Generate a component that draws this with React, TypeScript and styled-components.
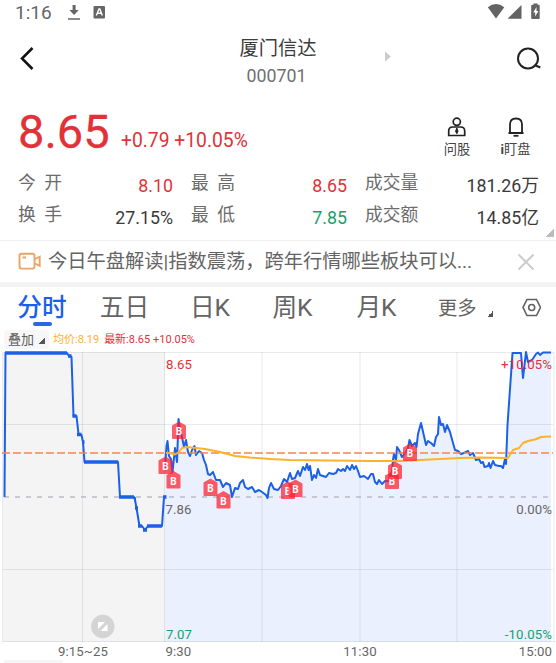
import React from 'react';
import styled, { createGlobalStyle } from 'styled-components';

const RED = '#e03238';
const GREEN = '#18a06a';
const BLUE = '#1b60e6';

const GlobalStyle = createGlobalStyle`
  * { box-sizing: border-box; }
  body {
    margin: 0;
    background: #fff;
    overflow: hidden;
    font-family: Roboto, "Noto Sans CJK SC", sans-serif;
    color: #3c3c3c;
  }
  svg { display: block; flex: none; }
`;

const Page = styled.main`
  width: 556px;
  height: 663px;
  overflow: hidden;
  display: flex;
  flex-direction: column;
`;

const StatusBar = styled.div`
  height: 26px;
  display: flex;
  justify-content: space-between;
  padding: 0 14px 0 15px;
  color: #666;
`;

const StatusGroup = styled.div`
  display: flex;
  align-items: flex-start;
`;

const Clock = styled.span`
  width: 50px;
  font-size: 19px;
  line-height: 26px;
`;

const Header = styled.header`
  height: 70px;
  display: grid;
  grid-template-columns: 178px 200px 178px;
`;

const HeaderSide = styled.div<{ $end?: boolean }>`
  display: flex;
  justify-content: ${p => (p.$end ? 'space-between' : 'flex-start')};
  padding: ${p => (p.$end ? '20px 14px 0 6px' : '20px 0 0 19px')};
`;

const Title = styled.div`
  text-align: center;
  padding-top: 10px;
`;

const StockName = styled.div`
  font-size: 19.3px;
  line-height: 26px;
`;

const StockCode = styled.div`
  font-size: 17.8px;
  line-height: 28px;
  padding-right: 3px;
  color: #707070;
`;

const Quote = styled.section`
  height: 69px;
  display: flex;
  padding: 0 12px 0 18px;
`;

const Price = styled.div`
  width: 103px;
  font-size: 47px;
  line-height: 72px;
  color: ${RED};
  -webkit-text-stroke: 0.3px ${RED};
`;

const Change = styled.div`
  flex: 1;
  font-size: 19.3px;
  line-height: 90px;
  white-space: nowrap;
  color: ${RED};
`;

const Action = styled.div<{ $w: number }>`
  width: ${p => p.$w}px;
  padding-top: 20px;
  display: flex;
  flex-direction: column;
  align-items: center;
  font-size: 13.3px;
  line-height: 20px;
  white-space: nowrap;
  color: #444;
`;

const ActionLabel = styled.span`
  margin-top: 2px;
`;

const Stats = styled.section`
  height: 76px;
  display: grid;
  grid-template-columns: 60px 95px 64px 110px 72px 120px;
  grid-template-rows: 32px 32px;
  padding: 1px 17px 0 18px;
  border-bottom: 1px solid #f0f0f0;
  position: relative;
`;

const StatLabel = styled.div<{ $spaced?: boolean; $indent?: number }>`
  font-size: 17.8px;
  line-height: 34px;
  padding-left: ${p => p.$indent || 0}px;
  letter-spacing: ${p => (p.$spaced ? '8.5px' : '0')};
  white-space: nowrap;
  color: #6c6c6c;
`;

const StatValue = styled.div<{ $color?: string }>`
  font-size: 17.8px;
  line-height: 32px;
  padding-top: 4px;
  text-align: right;
  white-space: nowrap;
  color: ${p => p.$color || '#3a3a3a'};
`;

const Corner = styled.i<{ $size: number; $color: string }>`
  width: ${p => p.$size}px;
  height: ${p => p.$size}px;
  background: linear-gradient(135deg, transparent 50%, ${p => p.$color} 50%);
`;

const ExpandCorner = styled(Corner)`
  position: absolute;
  right: 2px;
  bottom: 3px;
`;

const News = styled.section`
  height: 46px;
  display: flex;
  padding: 0 21px 0 18px;
  border-bottom: 5px solid #f4f4f4;
`;

const NewsText = styled.div`
  flex: 1;
  margin-left: 6px;
  font-size: 19.25px;
  line-height: 42px;
  white-space: nowrap;
  color: #646464;
`;

const IconSlot = styled.span<{ $top: number }>`
  padding-top: ${p => p.$top}px;
`;

const Tabs = styled.nav`
  height: 43px;
  display: grid;
  grid-template-columns: 84px 81px 90px 75px 93px 98px 35px;
`;

const Tab = styled.div<{ $active?: boolean }>`
  display: flex;
  flex-direction: column;
  align-items: center;
  font-size: 24.7px;
  line-height: 42px;
  white-space: nowrap;
  font-weight: ${p => (p.$active ? 500 : 400)};
  color: ${p => (p.$active ? BLUE : '#646464')};
`;

const TabMark = styled.i`
  width: 19px;
  height: 4px;
  margin-top: -7px;
  border-radius: 2px;
  background: #2b68e4;
`;

const MoreTab = styled.div`
  display: flex;
  align-items: flex-start;
  gap: 10px;
  padding-left: 15px;
  font-size: 19.3px;
  line-height: 44px;
  white-space: nowrap;
  color: #646464;

  ${Corner} { margin-top: 24px; }
`;

const Legend = styled.div`
  height: 18px;
  display: flex;
  font-size: 11px;
  line-height: 20px;
  white-space: nowrap;
`;

const Overlay = styled.div`
  width: 45px;
  height: 19px;
  margin: 0 4px;
  padding-left: 4px;
  display: flex;
  gap: 5px;
  font-size: 13px;
  line-height: 19px;
  background: #f7f7f7;
  border-radius: 3px;
  color: #5c5c5c;

  ${Corner} { margin-top: 8px; }
`;

const LegendItem = styled.span<{ $color: string }>`
  margin-right: 5px;
  color: ${p => p.$color};
`;

const ChartLabel = styled.text<{ $color?: string }>`
  font-size: 13.2px;
  letter-spacing: 0.1px;
  fill: ${p => p.$color || '#666'};
`;

const MarkerLetter = styled.text`
  font-size: 10px;
  font-weight: 700;
  fill: #fff;
  text-anchor: middle;
`;

const AUCTION =
  '4.5,497 5.5,353 67,353 69,356 71.5,357 73.5,416 76.5,416 78.5,434 81.5,435 83,442 84.5,462 118,462 120,497 134,497 135,500 136.5,508 139.5,526 142,526 145,530 148,526 162,526 164,497 165,497';

const PRICE =
  '165,468 166.5,446 167.5,441 169,456 171,459 172.5,472 175,448 177,462 178.5,419 180,430 182,437 184,447 186,440 188,452 190,456 192,450 194.5,446 196,455 199,451 202,453 204,460 206,465 208,474 210,475 213,472 216,480 220,480 223,487 226,483 230,485 232,497 235,488 238,489 240,483 243,480 245,487 248,489 252,487 255,492 259,490 262,492 266,495 267.5,498 269,488 271,483 274,489 278,490 281,486 284,479 287,482 290,473 292,479 295,478 298,471 300,476 303,467 305,470 307,464 308.5,470 310,466 312,480 314,475 316,478 318,469 320,475 323,476 326,477 329,473 333,474 336,473 338,469 341,471 343,469 345,471 347,466 350,470 352,465 354,469 356,466 358,471 360,477 364,476 368,479 371,474 373,474 375,482 377,484 379,480 382,484 385,481 389,481 392,472 393,460 394,454 396,460 397,447 399,450 402,457 406,452 408,448 409.5,440 412,446 415,443 416.5,447 418,434 421,423 424,436 426,445 428,441 431,443 434,446 436,437 438,434 439,417 441,425 443,424 445,432 447,425 450,432 453,443 455,450 458,451 461,454 464,453 468,451 470,455 473,453 476,460 479,459 481,463 483,462 484.5,467 488,466 489,463 490.5,468 493,461 495,465 499,466 501,466 503,468 505,459 506,464 507.5,425 512.5,353 521,353 523,378 526,352 528,362 532,360 536,354 538,352.5 540,355 543,352.5 551,352.5';

const AVERAGE =
  '166,453 170,453 175,454.5 179,452 182,448 187,447 205,449 220,452 235,456 250,457.5 270,459 290,460 330,460.5 370,461 400,461 420,460 440,459 460,458 480,457.5 508,458 511,453 513,450 519,448 523,443 528,441 535,439.5 541,437 551,436.5';

const MARKERS: [number, number][] = [
  [165.5, 466], [179, 431], [173.5, 480.5], [210.5, 488], [223.5, 500.5],
  [288, 491], [295.5, 489], [392, 481], [395, 471], [410, 453],
];

const Marker = ({ x, y }: { x: number; y: number }) => (
  <g>
    <path
      d={`M${x} ${y - 9.5}L${x + 7} ${y - 5.5}V${y + 7}Q${x + 7} ${y + 8} ${x + 6} ${y + 8}H${x - 6}Q${x - 7} ${y + 8} ${x - 7} ${y + 7}V${y - 5.5}Z`}
      fill="#ff1e2d"
      fillOpacity="0.72"
    />
    <MarkerLetter x={x} y={y + 4}>B</MarkerLetter>
  </g>
);

const Chart = () => (
  <svg width="556" height="315" viewBox="0 348 556 315">
    <rect x="3" y="352" width="162" height="290" fill="#f4f4f4" />
    <polygon points={`165,642 ${PRICE} 551,642`} fill="#eaf0fe" />
    <g fill="none" stroke="#5f6a80" strokeOpacity="0.14">
      <path d="M3 352.5H553M3 424.5H553M3 569.5H553M3 641.5H555" />
      <path d="M2.5 352V642M82.5 352V642M164.5 352V642" />
      <path strokeWidth="1.5" d="M262 352V642M360 352V642M457 352V642M554 352V642" strokeOpacity="0.1" />
    </g>
    <path d="M4 497H553" stroke="#b9bcc3" strokeWidth="1.5" strokeDasharray="5 6" />
    <g fill="none" strokeLinejoin="round">
      <polyline points={AUCTION} stroke={BLUE} strokeWidth="2" />
      <path
        d="M5 353H67M68 356H71.5M72.5 416H76.5M77 434.5H81.5M82 442H84.5M84 462H118M119 497H134M134 499H136M135 508H138M138 526H142M143 530H147M147 526H162M163 497H166.5"
        stroke={BLUE}
        strokeWidth="3.4"
      />
      <polyline points={PRICE} stroke={BLUE} strokeWidth="2" />
      <path d="M2 453H553" stroke="#ff8248" strokeWidth="1.7" strokeDasharray="8 3" />
      <polyline points={AVERAGE} stroke="#ffb229" strokeWidth="2" />
    </g>
    <ChartLabel x="166" y="368.5" $color={RED}>8.65</ChartLabel>
    <ChartLabel x="552" y="368.5" textAnchor="end" $color={RED}>+10.05%</ChartLabel>
    <ChartLabel x="165.5" y="513.5">7.86</ChartLabel>
    <ChartLabel x="552" y="513.5" textAnchor="end">0.00%</ChartLabel>
    <ChartLabel x="166" y="638.5" $color={GREEN}>7.07</ChartLabel>
    <ChartLabel x="552" y="638.5" textAnchor="end" $color={GREEN}>-10.05%</ChartLabel>
    {MARKERS.map(([x, y]) => <Marker key={x} x={x} y={y} />)}
    <circle cx="102.8" cy="626.5" r="11.7" fill="#d4d4d4" />
    <path d="M98 622h7l-7 7zM107.5 624v7h-7z" fill="#fff" />
    <ChartLabel x="58" y="656">9:15~25</ChartLabel>
    <ChartLabel x="165.5" y="656">9:30</ChartLabel>
    <ChartLabel x="360" y="656" textAnchor="middle">11:30</ChartLabel>
    <ChartLabel x="552" y="656" textAnchor="end">15:00</ChartLabel>
    <rect x="4" y="660" width="59" height="5" rx="2" fill="#f6f6f6" />
  </svg>
);

const App = () => (
  <>
    <GlobalStyle />
    <Page>
      <StatusBar>
        <StatusGroup>
          <Clock>1:16</Clock>
          <svg width="48" height="26" viewBox="65 0 48 26">
            <path d="M72.6 5h3v5h3.2L74.1 15l-4.7-5h3.2zM68 18.3h12v1.5H68z" fill="#666" />
            <rect x="93.5" y="6" width="11.5" height="12.5" rx="1" fill="#666" />
            <path d="M96.3 15.5 99 9h.8l2.5 6.5M97.4 13.2h3.8" fill="none" stroke="#fff" strokeWidth="1.4" />
          </svg>
        </StatusGroup>
        <svg width="55" height="26" viewBox="488 0 55 26" fill="#636363">
          <path d="M488.8 7.200Q497 1 505.300 7.200L497 18.600zM522.500 5v13.800h-14z" />
          <path d="M534.500 3.500h4v1.300h1.200q1 0 1 1V18q0 1-1 1h-6.500q-1 0-1-1V5.800q0-1 1-1h1.300z" />
          <path d="m537.500 7-3.200 5.500h1.900v4l3.100-5.500h-1.800z" fill="#fff" />
        </svg>
      </StatusBar>

      <Header>
        <HeaderSide>
          <svg width="16" height="24" viewBox="19 46 16 24">
            <path d="M32.500 48 22 58.500 32.500 69" fill="none" stroke="#111" strokeWidth="2.500" />
          </svg>
        </HeaderSide>
        <Title>
          <StockName>厦门信达</StockName>
          <StockCode>000701</StockCode>
        </Title>
        <HeaderSide $end>
          <svg width="8" height="20" viewBox="384 46 8 20">
            <path d="M385 51.500 391 56.500 385 61.500z" fill="#ccc" />
          </svg>
          <svg width="26" height="26" viewBox="516 46 26 26" fill="none" stroke="#222" strokeWidth="2">
            <circle cx="528" cy="58.500" r="10" />
            <path d="m534.500 65 5.800 2.500" />
          </svg>
        </HeaderSide>
      </Header>

      <Quote>
        <Price>8.65</Price>
        <Change>+0.79 +10.05%</Change>
        <Action $w={60}>
          <svg width="20" height="22" viewBox="447 116 20 22" fill="none" stroke="#222" strokeWidth="1.700">
            <circle cx="456.800" cy="121.800" r="3.600" />
            <path d="M448.700 135.500v-4.500q0-4 4-4h8q4 0 4 4v4.500z" />
            <path d="m456.800 128-1.200 3.200 1.200 2.500 1.200-2.500z" fill="#222" strokeWidth="1" />
          </svg>
          <ActionLabel>问股</ActionLabel>
        </Action>
        <Action $w={57}>
          <svg width="18" height="22" viewBox="506 116 18 22" fill="none" stroke="#222" strokeWidth="1.800">
            <path d="M509 133v-8.500q0-6 6-6t6 6v8.500M507.500 133h15" />
            <path d="M512.500 135.800h5" />
          </svg>
          <ActionLabel><b>i</b>盯盘</ActionLabel>
        </Action>
      </Quote>

      <Stats>
        <StatLabel $spaced>今开</StatLabel>
        <StatValue $color={RED}>8.10</StatValue>
        <StatLabel $spaced $indent={18}>最高</StatLabel>
        <StatValue $color={RED}>8.65</StatValue>
        <StatLabel $indent={18}>成交量</StatLabel>
        <StatValue>181.26万</StatValue>
        <StatLabel $spaced>换手</StatLabel>
        <StatValue>27.15%</StatValue>
        <StatLabel $spaced $indent={18}>最低</StatLabel>
        <StatValue $color={GREEN}>7.85</StatValue>
        <StatLabel $indent={18}>成交额</StatLabel>
        <StatValue>14.85亿</StatValue>
        <ExpandCorner $size={9} $color="#bbb" />
      </Stats>

      <News>
        <IconSlot $top={11}>
          <svg width="24" height="20" viewBox="18 252 24 20" fill="none" stroke="#eda365" strokeWidth="1.900">
            <rect x="19.500" y="253.800" width="15" height="14.800" rx="2" />
            <path d="m35 259 4.700-2.300v9.200L35 263.500M22.500 257.500h3.500" />
          </svg>
        </IconSlot>
        <NewsText>今日午盘解读|指数震荡，跨年行情哪些板块可以...</NewsText>
        <IconSlot $top={12}>
          <svg width="18" height="18" viewBox="0 0 18 18" stroke="#ccc" strokeWidth="2">
            <path d="m1.500 1.500 15 15M16.500 1.500l-15 15" />
          </svg>
        </IconSlot>
      </News>

      <Tabs>
        <Tab $active>分时<TabMark /></Tab>
        <Tab>五日</Tab>
        <Tab>日K</Tab>
        <Tab>周K</Tab>
        <Tab>月K</Tab>
        <MoreTab>更多<Corner $size={6} $color="#555" /></MoreTab>
        <IconSlot $top={11}>
          <svg width="20" height="20" viewBox="521 298 20 20" fill="none" stroke="#606060" strokeWidth="1.600">
            <path d="M527 299.500h9.500l4 8-4 8H527l-4-8z" />
            <circle cx="531.700" cy="307.500" r="3" />
          </svg>
        </IconSlot>
      </Tabs>

      <Legend>
        <Overlay>叠加<Corner $size={6} $color="#555" /></Overlay>
        <LegendItem $color="#ffb02e">均价:8.19</LegendItem>
        <LegendItem $color={RED}>最新:8.65 +10.05%</LegendItem>
      </Legend>

      <Chart />
    </Page>
  </>
);

export default App;
